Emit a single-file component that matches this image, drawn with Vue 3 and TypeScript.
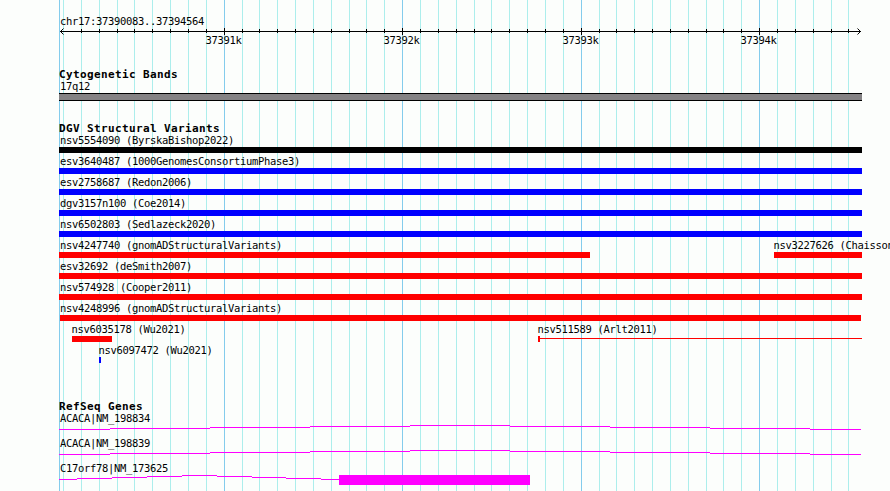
<script setup lang="ts">
interface Feature {
  name: string
  start: number
  end: number
  color: string
  labelShift?: number
  tail?: number
}

interface Gene {
  name: string
  path: string
  exon?: { x: number; width: number }
}

const ORIGIN = 59
const majors = [224, 402, 581, 759]
const minors = [
  63, 81, 99, 117, 134, 152, 170, 188, 206, 242, 259, 277, 295, 313, 331, 349, 366, 384, 420, 438,
  456, 474, 491, 509, 527, 545, 563, 599, 616, 634, 652, 670, 688, 706, 723, 741, 777, 795, 813, 831, 848,
]
const majorLabels = ['37391k', '37392k', '37393k', '37394k']

const RED = '#ff0000'
const BLUE = '#0000ff'

const rows: Feature[][] = [
  [{ name: 'nsv5554090 (ByrskaBishop2022)', start: 59, end: 862, color: '#000000' }],
  [{ name: 'esv3640487 (1000GenomesConsortiumPhase3)', start: 59, end: 862, color: BLUE }],
  [{ name: 'esv2758687 (Redon2006)', start: 59, end: 862, color: BLUE }],
  [{ name: 'dgv3157n100 (Coe2014)', start: 59, end: 862, color: BLUE }],
  [{ name: 'nsv6502803 (Sedlazeck2020)', start: 59, end: 862, color: BLUE }],
  [
    { name: 'nsv4247740 (gnomADStructuralVariants)', start: 59, end: 590, color: RED },
    { name: 'nsv3227626 (Chaisson', start: 774, end: 862, color: RED, labelShift: -1.5 },
  ],
  [{ name: 'esv32692 (deSmith2007)', start: 59, end: 862, color: RED }],
  [{ name: 'nsv574928 (Cooper2011)', start: 59, end: 862, color: RED }],
  [{ name: 'nsv4248996 (gnomADStructuralVariants)', start: 60, end: 861, color: RED, labelShift: -1 }],
  [
    { name: 'nsv6035178 (Wu2021)', start: 72, end: 112, color: RED, labelShift: -1.5 },
    { name: 'nsv511589 (Arlt2011)', start: 538, end: 540, color: RED, labelShift: -1.5, tail: 322 },
  ],
  [{ name: 'nsv6097472 (Wu2021)', start: 99, end: 101, color: BLUE, labelShift: -1.5 }],
]

// Runs of [end x, y]; each run is a flat one-pixel segment.
function steps(runs: [number, number][]): string {
  let x = 0
  return runs
    .map(([end, y]) => {
      const segment = `M${x} ${y}.5H${end - ORIGIN}`
      x = end - ORIGIN
      return segment
    })
    .join('')
}

const acaca = steps([
  [110, 4], [210, 3], [310, 2], [410, 1], [510, 0], [610, 1], [710, 2], [810, 3], [861, 4],
])

const genes: Gene[] = [
  { name: 'ACACA|NM_198834', path: acaca },
  { name: 'ACACA|NM_198839', path: acaca },
  {
    name: 'C17orf78|NM_173625',
    path: steps([
      [77, 4], [112, 3], [147, 2], [182, 1], [217, 0], [252, 1], [286, 2], [321, 3], [339, 4],
    ]),
    exon: { x: 339 - ORIGIN, width: 191 },
  },
]

function featureStyle(row: Feature[], i: number) {
  const f = row[i]
  const previousEnd = i === 0 ? ORIGIN : row[i - 1].end
  return { marginLeft: `${f.start - previousEnd}px`, width: `${f.end - f.start}px` }
}
</script>

<template>
  <main class="browser">
    <svg class="grid" width="890" height="491" shape-rendering="crispEdges" aria-hidden="true">
      <rect v-for="x in minors" :key="x" class="minor" :x="x" y="0" width="1" height="491" />
      <rect v-for="x in [ORIGIN, ...majors]" :key="x" class="major" :x="x" y="0" width="1" height="491" />
    </svg>

    <header class="overview">
      <div class="label">chr17:37390083..37394564</div>
      <svg class="ruler" width="803" height="21">
        <g shape-rendering="crispEdges">
          <rect x="1" y="3" width="801" height="1" />
          <rect v-for="x in minors.slice(1)" :key="x" :x="x - ORIGIN" y="1" width="1" height="4" />
          <rect v-for="x in majors" :key="x" :x="x - ORIGIN" y="0" width="1" height="7" />
        </g>
        <path class="arrow" d="M4.5 0.5L1.5 3.5L4.5 6.5M798.5 0.5L801.5 3.5L798.5 6.5" />
        <text v-for="(x, i) in majors" :key="x" :x="x - ORIGIN - 18.5" y="16">{{ majorLabels[i] }}</text>
      </svg>
    </header>

    <section class="cytoband">
      <h2>Cytogenetic Bands</h2>
      <div class="label">17q12</div>
      <div class="band"></div>
    </section>

    <section class="variants">
      <h2>DGV Structural Variants</h2>
      <div v-for="(row, r) in rows" :key="r" class="row">
        <div v-for="(f, i) in row" :key="f.name" class="feature" :style="featureStyle(row, i)">
          <div class="label" :style="{ marginLeft: `${f.labelShift ?? 0}px` }">{{ f.name }}</div>
          <div class="glyph">
            <div class="bar" :style="{ background: f.color }"></div>
            <div v-if="f.tail" class="tail" :style="{ background: f.color, width: `${f.tail}px` }"></div>
          </div>
        </div>
      </div>
    </section>

    <section class="genes">
      <h2>RefSeq Genes</h2>
      <div v-for="g in genes" :key="g.name" class="gene">
        <div class="label">{{ g.name }}</div>
        <svg class="transcript" width="803" height="12" shape-rendering="crispEdges">
          <path :d="g.path" />
          <rect v-if="g.exon" :x="g.exon.x" y="0" :width="g.exon.width" height="10" />
        </svg>
      </div>
    </section>
  </main>
</template>

<style>
body {
  margin: 0;
  background: #fcfefc;
}
</style>

<style scoped>
.browser {
  position: relative;
  box-sizing: border-box;
  width: 890px;
  height: 491px;
  padding: 15px 0 0 59px;
  overflow: hidden;
  background: #fcfefc;
  color: #000;
  font-family: "DejaVu Sans Mono", "Liberation Mono", monospace;
  font-size: 10.5px;
  letter-spacing: -0.322px;
}

.browser > :not(.grid) {
  position: relative;
}

.grid {
  position: absolute;
  top: 0;
  left: 0;
}

.minor {
  fill: #aceeec;
}

.major {
  fill: #84ccec;
}

.label {
  height: 13px;
  padding-left: 1px;
  line-height: 13px;
  white-space: pre;
}

h2 {
  height: 12px;
  margin: 0;
  font-size: 11px;
  font-weight: 700;
  line-height: 14px;
  letter-spacing: 0.378px;
  white-space: pre;
}

.ruler {
  display: block;
}

.arrow {
  fill: none;
  stroke: #000;
}

.cytoband {
  margin-top: 19px;
}

.band {
  box-sizing: border-box;
  width: 803px;
  height: 8px;
  border: solid #000;
  border-width: 1px 0;
  background: #848284;
}

.variants {
  margin-top: 21px;
}

.row {
  display: flex;
  height: 21px;
}

.feature {
  flex: none;
}

.glyph {
  display: flex;
  align-items: flex-start;
}

.bar {
  flex: none;
  width: 100%;
  height: 6px;
}

.tail {
  flex: none;
  height: 1px;
  margin-top: 2px;
}

.genes {
  margin-top: 35px;
}

.gene {
  height: 25px;
}

.transcript {
  display: block;
}

.transcript path {
  fill: none;
  stroke: #f0f;
}

.transcript rect {
  fill: #f0f;
}
</style>
